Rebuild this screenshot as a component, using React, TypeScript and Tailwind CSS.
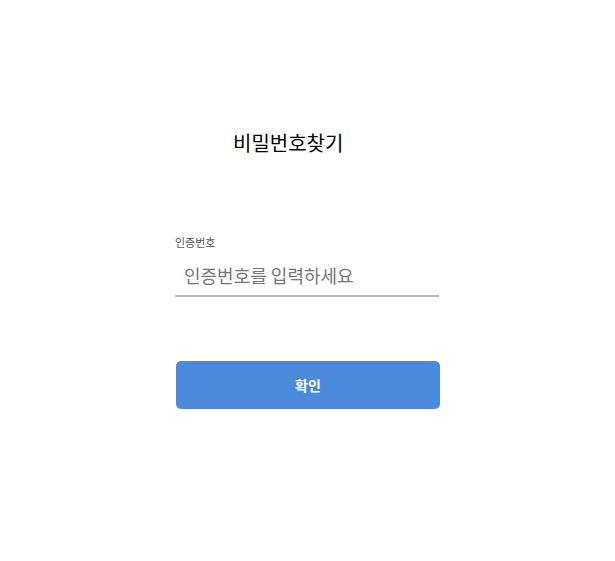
export default function App() {
  const font = { fontFamily: '"Noto Sans CJK KR", "Noto Sans", sans-serif' };
  return (
    <div className="w-[615px] h-[561px] bg-white" style={font}>
      <div className="w-[264px] ml-[175px] pt-[128px] flex flex-col items-start">
        <h1 className="pl-[58px] text-[20px] leading-[30px] text-black font-normal">비밀번호찾기</h1>
        <label className="mt-[76px] text-[11px] leading-[16px] text-[#555]">인증번호</label>
        <input
          className="mt-[6px] w-[264px] h-[41px] pl-[9px] pr-[8px] pb-[2px] text-[18px] text-[#333] placeholder-[#777] border-b-2 border-[#bbb] outline-none"
          placeholder="인증번호를 입력하세요"
        />
        <button className="mt-[64px] ml-[1px] w-[264px] h-[48px] rounded-[5px] bg-[#4a89dc] text-white text-[14px] font-bold">
          확인
        </button>
      </div>
    </div>
  );
}
